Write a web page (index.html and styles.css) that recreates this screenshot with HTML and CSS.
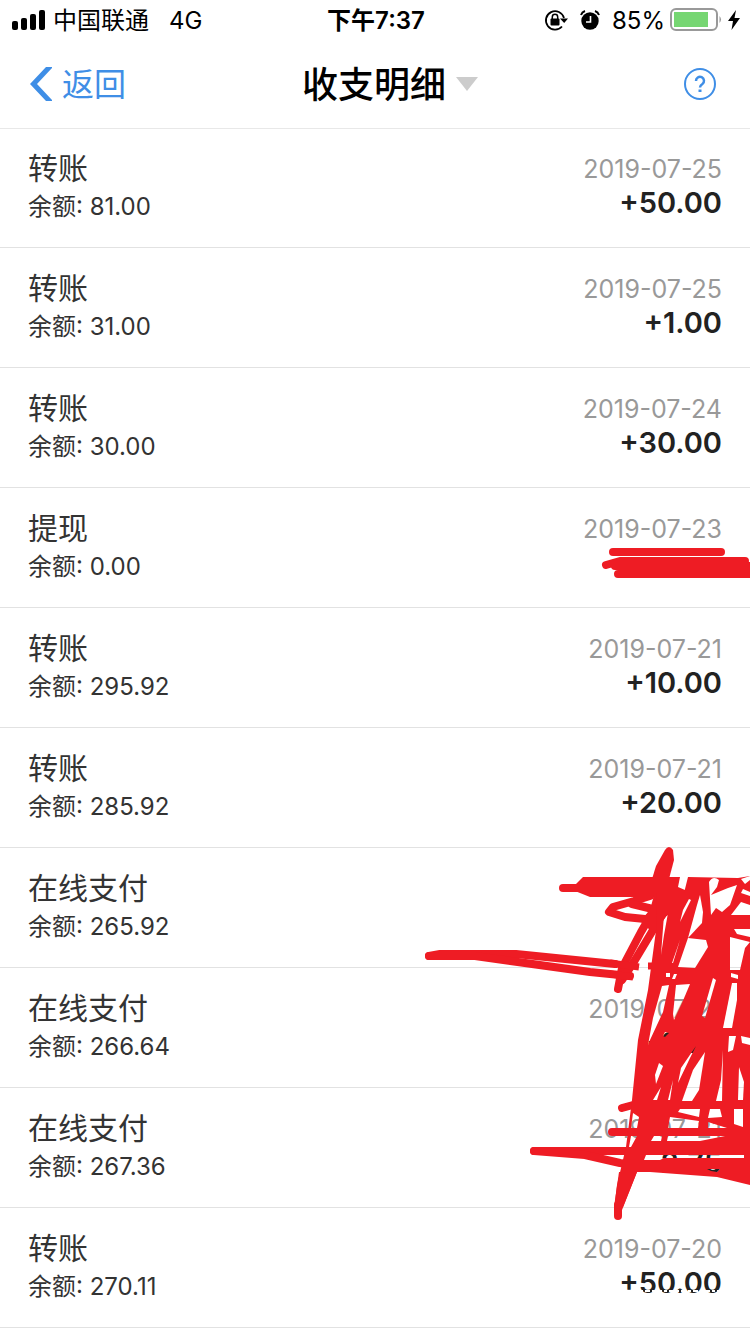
FILE: index.html
```html
<!DOCTYPE html>
<html lang="zh-CN">
<head>
  <meta charset="UTF-8">
  <meta name="viewport" content="width=device-width, initial-scale=1.0">
  <title>收支明细</title>
  <link rel="stylesheet" href="styles.css">
</head>
<body>
<div class="status-bar">
  <div class="status-left">
    <svg class="signal" viewBox="0 0 34 20" width="34" height="20">
      <rect x="0" y="11" width="6" height="9" rx="2"/>
      <rect x="9" y="8" width="6" height="12" rx="2"/>
      <rect x="18" y="4" width="6" height="16" rx="2"/>
      <rect x="27" y="0" width="6" height="20" rx="2"/>
    </svg>
    <span class="carrier">中国联通</span>
    <span>4G</span>
  </div>
  <div class="status-time">下午7:37</div>
  <div class="status-right">
    <svg class="lock" viewBox="0 0 24 22" width="24" height="22">
      <path d="M18 17.500A9.200 9.200 0 1 1 20 9" fill="none" stroke="#000" stroke-width="1.800"/>
      <path d="M16 9.500H24L20.200 14z"/>
      <rect x="6.500" y="9.500" width="9" height="7" rx="1"/>
      <path d="M8.300 10V8a2.700 2.700 0 0 1 5.400 0v2" fill="none" stroke="#000" stroke-width="1.500"/>
    </svg>
    <svg class="alarm" viewBox="0 0 20 20" width="20" height="20">
      <circle cx="10" cy="11" r="8.700"/>
      <path d="M1 5Q2 2 5 1M19 5Q18 2 15 1" fill="none" stroke="#000" stroke-width="2"/>
      <path d="M10.500 6v6H6" fill="none" stroke="#fff" stroke-width="1.600"/>
    </svg>
    <span>85%</span>
    <svg class="battery" viewBox="0 0 52 24" width="52" height="24">
      <rect x="1" y="1" width="46" height="21" rx="5" fill="none" stroke="#999" stroke-width="2"/>
      <rect x="4" y="4" width="34" height="15" fill="#76d672"/>
      <path d="M49.500 8q3 3.500 0 7z" fill="#999"/>
    </svg>
    <svg class="bolt" viewBox="0 0 12 20" width="12" height="20">
      <path d="M8 0L0 11h5L3.500 20L12 8H6.500z"/>
    </svg>
  </div>
</div>

<header class="nav-bar">
  <a href="#" class="back">
    <svg viewBox="0 0 24 34" width="24" height="34">
      <path d="M18 0H25L9 17L25 34H18L2 17z" fill="#3f8ee6"/>
    </svg>
    <span class="nav-text">返回</span>
  </a>
  <button class="nav-title">
    <span class="nav-text">收支明细</span>
    <svg viewBox="0 0 22 14" width="22" height="14"><path d="M0 0h22L11 14z" fill="#ccc"/></svg>
  </button>
  <button class="help" aria-label="帮助">
    <svg viewBox="0 0 32 32" width="32" height="32" fill="none" stroke="#3f8ee6">
      <circle cx="16" cy="16" r="15" stroke-width="2"/>
      <path d="M12 13a4 4 0 1 1 6.400 3q-2.400 1.600-2.400 3.500" stroke-width="2.500"/>
      <path d="M16 21.500v2.500" stroke-width="3"/>
    </svg>
  </button>
</header>

<main class="records">
  <ul class="record-list">
    <li class="record">
      <div class="info"><span class="type">转账</span><span class="balance">余额: 81.00</span></div>
      <div class="detail"><span class="date">2019-07-25</span><span class="amount">+50.00</span></div>
    </li>
    <li class="record">
      <div class="info"><span class="type">转账</span><span class="balance">余额: 31.00</span></div>
      <div class="detail"><span class="date">2019-07-25</span><span class="amount">+1.00</span></div>
    </li>
    <li class="record">
      <div class="info"><span class="type">转账</span><span class="balance">余额: 30.00</span></div>
      <div class="detail"><span class="date">2019-07-24</span><span class="amount">+30.00</span></div>
    </li>
    <li class="record">
      <div class="info"><span class="type">提现</span><span class="balance">余额: 0.00</span></div>
      <div class="detail"><span class="date">2019-07-23</span><span class="amount"></span></div>
    </li>
    <li class="record">
      <div class="info"><span class="type">转账</span><span class="balance">余额: 295.92</span></div>
      <div class="detail"><span class="date">2019-07-21</span><span class="amount">+10.00</span></div>
    </li>
    <li class="record">
      <div class="info"><span class="type">转账</span><span class="balance">余额: 285.92</span></div>
      <div class="detail"><span class="date">2019-07-21</span><span class="amount">+20.00</span></div>
    </li>
    <li class="record">
      <div class="info"><span class="type">在线支付</span><span class="balance">余额: 265.92</span></div>
      <div class="detail"><span class="date"></span><span class="amount"></span></div>
    </li>
    <li class="record">
      <div class="info"><span class="type">在线支付</span><span class="balance">余额: 266.64</span></div>
      <div class="detail"><span class="date">2019-07-21</span><span class="amount">-0.72</span></div>
    </li>
    <li class="record">
      <div class="info"><span class="type">在线支付</span><span class="balance">余额: 267.36</span></div>
      <div class="detail"><span class="date">2019-07-21</span><span class="amount">-2.75</span></div>
    </li>
    <li class="record">
      <div class="info"><span class="type">转账</span><span class="balance">余额: 270.11</span></div>
      <div class="detail"><span class="date">2019-07-20</span><span class="amount">+50.00</span></div>
    </li>
  </ul>

  <!-- red pen over the private amounts -->
  <svg class="scribble" viewBox="420 540 330 780" width="330" height="780">
    <mask id="gaps" maskUnits="userSpaceOnUse" x="420" y="540" width="330" height="780">
      <rect x="420" y="540" width="330" height="780" fill="#fff"/>
      <g fill="#000">
        <path d="M709 882Q713 875 719 880L717 887L711 895L728 888L737 885L730 905L722 912L716 908L711 915z"/>
        <path d="M700 895L703 912L702 923L688 938L697 905z"/>
        <path d="M688 938L706 940L708 947L695 968L678 967z"/>
        <path d="M664 915L668 913L664 935L661 955z"/>
        <path d="M689 899L691 900L680 922L683 910z"/>
        <path d="M680 940L673 963L672 963z"/>
        <path d="M741 902L750 905V915H731z"/>
        <path d="M743 889L750 892V896L741 893z"/>
        <path d="M741 879L750 876V880L745 884z"/>
        <path d="M734 929H750V937L737 934z"/>
        <path d="M730 937L750 942L745 948L740 970L730 970z"/>
        <path d="M666 973h4v4h-4zM674 974h3l-2 5h-3zM731 973l7 2v4l-7-2z"/>
        <path d="M676 985L690 984L682 1003L674 1020L673 1014z"/>
        <path d="M662 986L669 985L663 1012L650 1040L648 1045L653 1018z"/>
        <path d="M663 1036L665 1032L669 1033L665 1037z"/>
        <path d="M713 978L716 980L705 1018L702 1016z"/>
        <path d="M732 983H737V1000L732 1028H723z"/>
        <path d="M729 1036H736L733 1050L728 1052zM741 1036L750 1038V1045L742 1043z"/>
        <path d="M705 1052L699 1090L692 1101H682L693 1070z"/>
        <path d="M696 1046L690 1058L678 1083L681 1068z"/>
        <path d="M659 1063L663 1066L656 1084L655 1075z"/>
        <path d="M661 1087L657 1100H653zM673 1080L670 1100H668z"/>
        <path d="M721 1080L723 1050L722 1101H716z"/>
        <path d="M739 1067L744 1082L743 1100H738z"/>
        <path d="M680 1109H700L699 1117L678 1112zM710 1109H720L722 1117L708 1118zM734 1109H743V1127L734 1124z"/>
        <path d="M670 1117L699 1121L698 1128H668zM708 1122L727 1128H708z"/>
        <path d="M668 1136H725L700 1141H667zM654 1136H662L661 1141H651z"/>
        <path d="M633 1113L639 1117L637 1128H631zM631 1136H637L631 1147H629z"/>
        <path d="M646 1155H744V1158H664L660 1160L644 1160z"/>
        <path d="M707 1169H720L717 1172L711 1171z"/>
      </g>
    </mask>

    <g fill="none" stroke="#ee1c24" stroke-width="8" stroke-linecap="round" stroke-linejoin="round">
      <path d="M613 552H721"/>
      <path d="M606 565L620 561H745M615 566H754M618 574H754"/>

      <path d="M429 956L440 954H516L615 964"/>
      <path d="M429 956H475L590 972L630 976"/>
      <path d="M563 888H582"/>
      <path d="M650 896L634 901L613 907L609 912L625 917L655 920"/>
      <path d="M632 904L665 912"/>
      <path d="M655 908L641 932L622 968L618 989"/>
      <path d="M672 898L650 935L635 960L622 980"/>
      <path d="M622 1108L633 1105H660M612 1132H650M534 1151H650"/>
      <path d="M534 1151L585 1155L620 1163L646 1167"/>
      <path d="M618 1205V1216"/>
    </g>
    <g fill="none" stroke="#ee1c24" stroke-width="7">
      <path d="M610 963L639 967M610 974L633 977M648 966L660 966"/>
    </g>
    <g fill="#ee1c24">
      <path d="M583 877H680L678 887L685 890V897H590L575 891V885z"/>
      <path d="M665 850L656 866L652 879H669L674 860L673 850z"/>
      <path d="M654 895H680L668 914L660 925L650 930L640 921L650 910z"/>
      <path d="M665 850Q669 844 673 850z"/>
      <path mask="url(#gaps)" d="M656 893H684L688 877L738 878L750 876V1185L717 1177L650 1172L637 1172L623 1207L614 1210L617 1185L626 1147L632 1100L638 1040L648 990L657 923z"/>
      <path d="M619 1172H637L622 1210L614 1207z"/>
    </g>
    <path d="M640 1291H720" fill="none" stroke="#fff" stroke-width="2" stroke-dasharray="3 2 5 2"/>
  </svg>
</main>
</body>
</html>
```
FILE: styles.css
```css
* {
  box-sizing: border-box;
}
body {
  margin: 0;
  background: #fff;
  color: #333;
  font-family: Inter, "Noto Sans CJK SC", sans-serif;
}
button {
  border: 0;
  padding: 0;
  background: none;
  font-family: inherit;
}
svg {
  display: block;
}

.status-bar {
  display: grid;
  grid-template-columns: 1fr auto 1fr;
  align-items: center;
  height: 40px;
  padding: 0 10px 0 12px;
  color: #000;
  font-size: 24px;
}
.status-left,
.status-right {
  display: flex;
  align-items: center;
}
.carrier {
  margin: 0 20px 0 7px;
  padding-bottom: 4px;
}
.status-time {
  padding-bottom: 4px;
  font-weight: 600;
}
.status-right {
  justify-content: flex-end;
}
.lock {
  margin-right: 12px;
}
.alarm {
  margin-right: 12px;
}
.battery {
  margin: 0 6px 0 5px;
}

.nav-bar {
  display: grid;
  grid-template-columns: 1fr auto 1fr;
  align-items: center;
  height: 89px;
  padding: 0 34px 0 28px;
  border-bottom: 1px solid #e8e8e8;
}
.back {
  display: flex;
  align-items: center;
  gap: 10px;
  color: #3f8ee6;
  font-size: 32px;
  text-decoration: none;
}
.nav-title {
  display: flex;
  align-items: center;
  gap: 10px;
  padding-left: 36px;
  color: #000;
  font-size: 36px;
  font-weight: 500;
}
.nav-text {
  padding-bottom: 4px;
}
.help {
  justify-self: end;
}

.records {
  position: relative;
  margin-top: -1px; /* first row sits on the header line */
}
.record-list {
  margin: 0;
  padding: 0;
  list-style: none;
}
.record {
  display: flex;
  justify-content: space-between;
  height: 120px;
  padding: 20px 28px;
  border-bottom: 1px solid #e2e2e2;
}
.info,
.detail {
  display: flex;
  flex-direction: column;
}
.detail {
  align-items: flex-end;
}
.type {
  font-size: 30px;
  line-height: 40px;
}
.balance {
  font-size: 24px;
  line-height: 38px;
}
.date {
  height: 42px;
  color: #999;
  font-size: 25px;
  line-height: 42px;
}
.amount {
  color: #222;
  font-size: 29px;
  font-weight: 600;
  line-height: 26px;
}

.scribble {
  position: absolute;
  top: 412px;
  right: 0;
}
```
